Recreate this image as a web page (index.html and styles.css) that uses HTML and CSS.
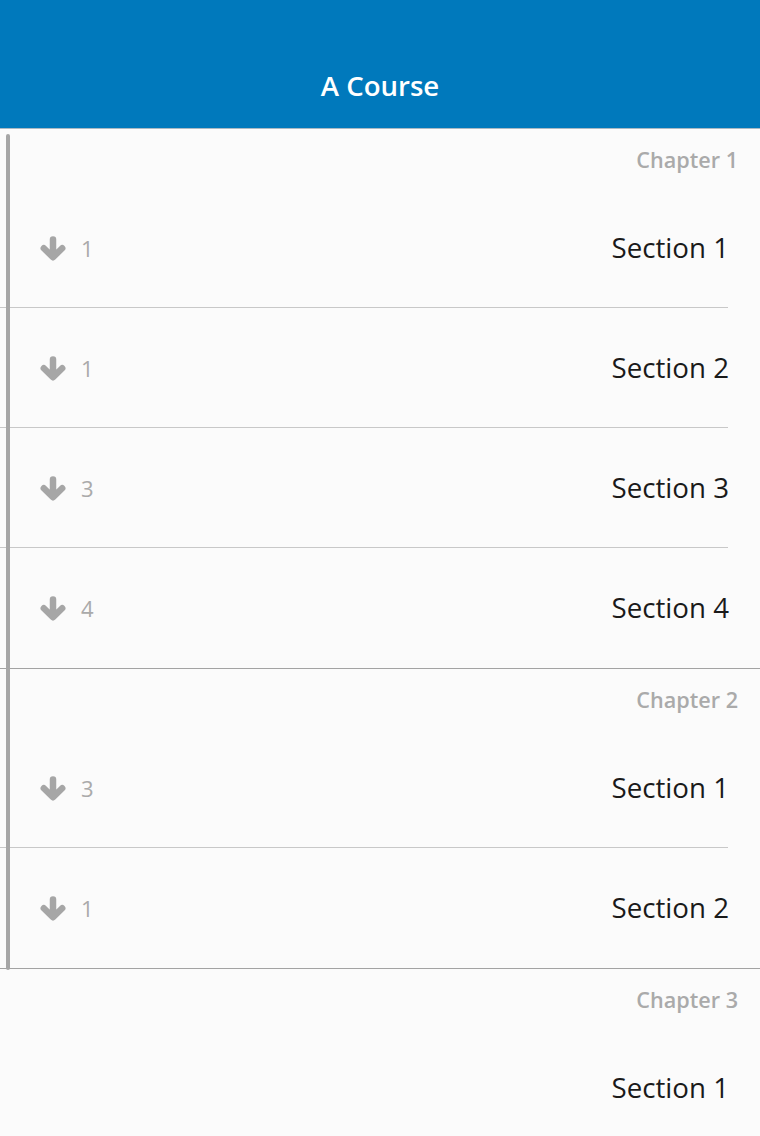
FILE: index.html
```html
<!DOCTYPE html>
<html>
<head>
<meta charset="utf-8">
<link rel="stylesheet" href="styles.css">
</head>
<body>
<header class="topbar"><h1 class="title">A Course</h1></header>
<main class="list">
  <div class="scrollbar"></div>

  <section class="chapter">
    <div class="chapter-label">Chapter 1</div>
    <div class="row">
      <div class="meta"><svg class="arrow" viewBox="0 0 26 25"><path d="M13 3.5V19.5M3.8 12.2l9.2 9 9.2-9"/></svg><span class="count">1</span></div>
      <div class="name">Section 1</div>
    </div>
    <div class="row">
      <div class="meta"><svg class="arrow" viewBox="0 0 26 25"><path d="M13 3.5V19.5M3.8 12.2l9.2 9 9.2-9"/></svg><span class="count">1</span></div>
      <div class="name">Section 2</div>
    </div>
    <div class="row">
      <div class="meta"><svg class="arrow" viewBox="0 0 26 25"><path d="M13 3.5V19.5M3.8 12.2l9.2 9 9.2-9"/></svg><span class="count">3</span></div>
      <div class="name">Section 3</div>
    </div>
    <div class="row last">
      <div class="meta"><svg class="arrow" viewBox="0 0 26 25"><path d="M13 3.5V19.5M3.8 12.2l9.2 9 9.2-9"/></svg><span class="count">4</span></div>
      <div class="name">Section 4</div>
    </div>
  </section>

  <section class="chapter">
    <div class="chapter-label">Chapter 2</div>
    <div class="row">
      <div class="meta"><svg class="arrow" viewBox="0 0 26 25"><path d="M13 3.5V19.5M3.8 12.2l9.2 9 9.2-9"/></svg><span class="count">3</span></div>
      <div class="name">Section 1</div>
    </div>
    <div class="row last">
      <div class="meta"><svg class="arrow" viewBox="0 0 26 25"><path d="M13 3.5V19.5M3.8 12.2l9.2 9 9.2-9"/></svg><span class="count">1</span></div>
      <div class="name">Section 2</div>
    </div>
  </section>

  <section class="chapter">
    <div class="chapter-label">Chapter 3</div>
    <div class="row">
      <div class="meta"></div>
      <div class="name">Section 1</div>
    </div>
  </section>
</main>
</body>
</html>
```

FILE: styles.css
```css
html, body {
  margin: 0;
  padding: 0;
  background: #fbfbfb;
  font-family: "Open Sans", "Noto Sans", sans-serif;
  overflow: hidden;
}

.topbar {
  height: 129px;
  background: #0079bc;
  box-sizing: border-box;
  border-bottom: 1px solid #a9b9c4;
  display: flex;
  align-items: flex-end;
  justify-content: center;
}

.title {
  margin: 0 0 25px 0;
  color: #ffffff;
  font-size: 27.6px;
  font-weight: 600;
  line-height: 36px;
}

.list {
  position: relative;
}

.scrollbar {
  position: absolute;
  left: 6px;
  top: 5px;
  width: 4px;
  height: 836px;
  border-radius: 2px;
  background: #a6a6a6;
}

.chapter-label {
  height: 59px;
  box-sizing: border-box;
  padding: 16px 22px 0 0;
  text-align: right;
  color: #aaaaaa;
  font-size: 21.6px;
  font-weight: 600;
  line-height: 30px;
}

.row {
  height: 120px;
  box-sizing: border-box;
  display: flex;
  align-items: center;
  justify-content: space-between;
  padding: 0 31px 0 40px;
  background-image: linear-gradient(#c8c8c8, #c8c8c8);
  background-size: 728px 1px;
  background-position: 0 119px;
  background-repeat: no-repeat;
}

.row.last {
  height: 121px;
  background-image: none;
  border-bottom: 1px solid #a3a3a3;
}

.meta {
  display: flex;
  align-items: center;
  gap: 15px;
}

.arrow {
  width: 26px;
  height: 25px;
  fill: none;
  stroke: #a6a6a6;
  stroke-width: 6.5;
  stroke-linecap: round;
  stroke-linejoin: round;
}

.count {
  color: #aaaaaa;
  font-size: 22px;
  line-height: 30px;
}

.name {
  color: #1a1a1a;
  font-size: 27.7px;
  line-height: 36px;
  padding-bottom: 2px;
}
```
